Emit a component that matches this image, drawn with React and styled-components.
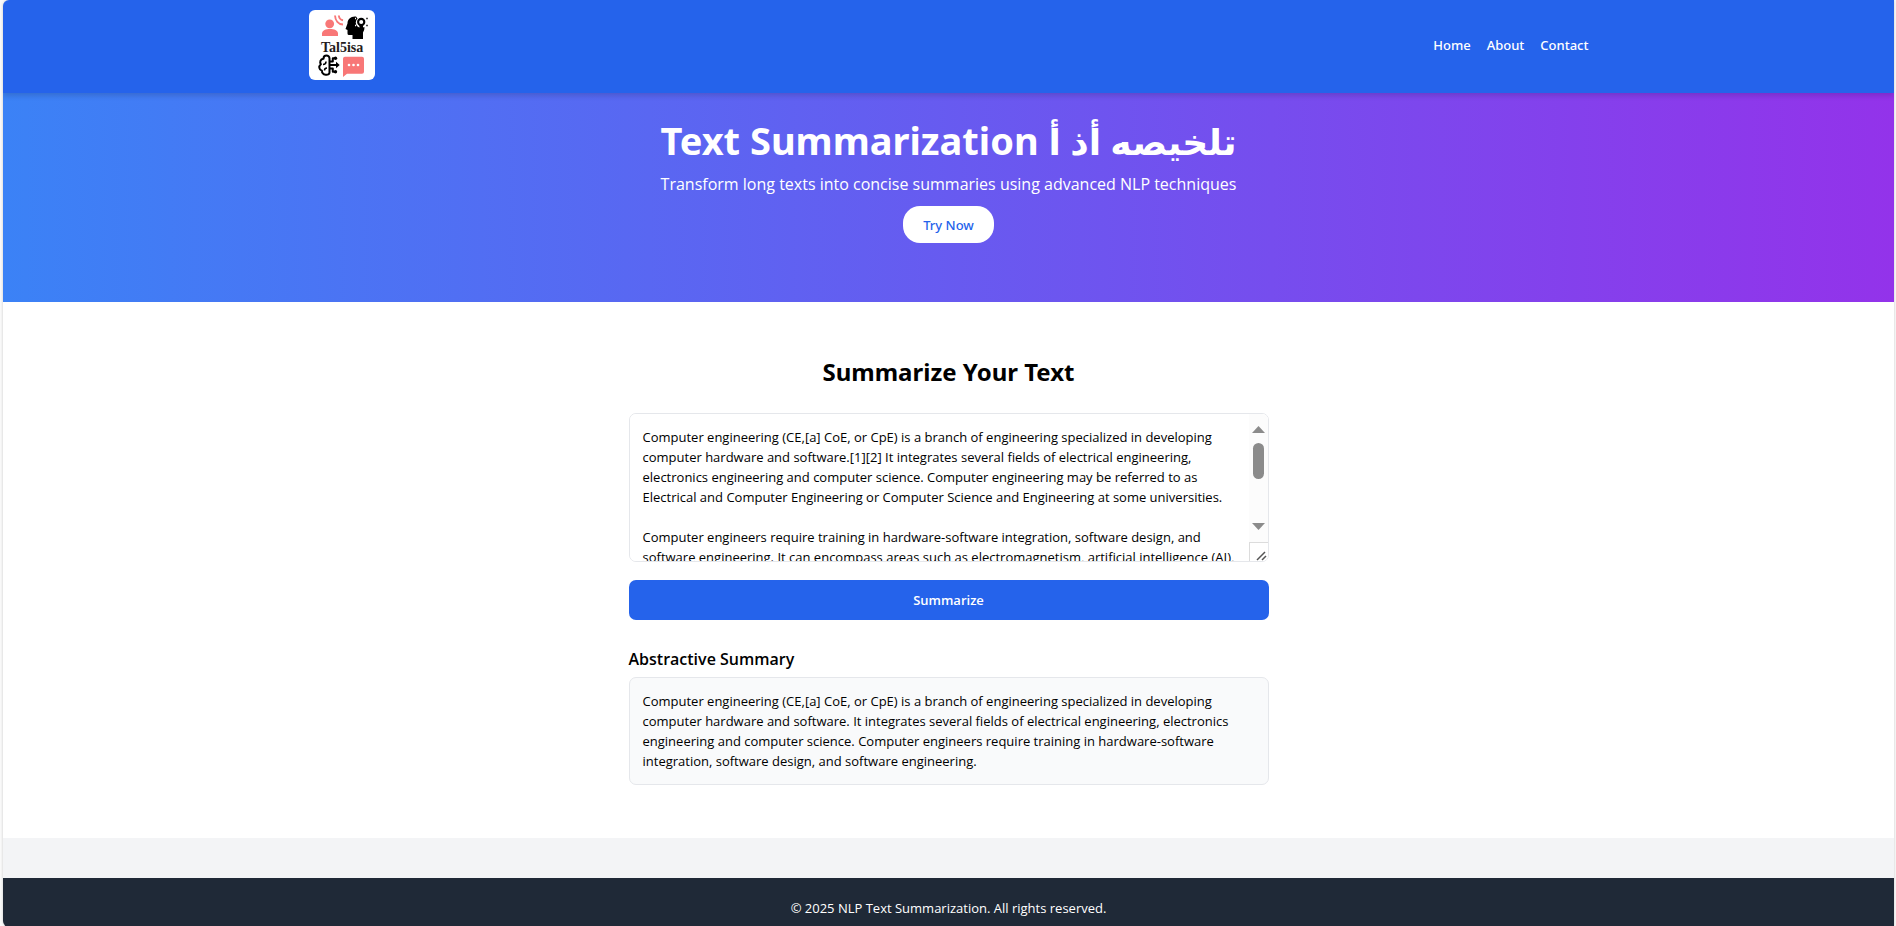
import React, { useState } from "react";
import styled, { createGlobalStyle } from "styled-components";

const displayFont = `"Segoe UI", "Noto Sans", "DejaVu Sans", sans-serif`;

const GlobalStyle = createGlobalStyle`
  *, *::before, *::after { box-sizing: border-box; }
  body {
    margin: 0;
    background: #fafafa;
    color: #000;
    font-family: "Segoe UI", "Open Sans", "DejaVu Sans", sans-serif;
    font-size: 13px;
    line-height: 20px;
  }
  h1, h2, h3, p { margin: 0; }
  button, textarea { font: inherit; }
`;

const Page = styled.div`
  display: flex;
  flex-direction: column;
  min-height: 100vh;
  margin: 0 2px 0 3px;
  border-radius: 6px 0 0 6px;
  overflow: hidden;
  background: #f3f4f6;
  box-shadow: 0 0 3px rgba(0, 0, 0, 0.2);
`;

const Header = styled.header`
  position: relative;
  z-index: 1;
  padding: 10px 16px 13px;
  background: #2563eb;
  color: #fff;
  box-shadow: 0 3px 5px rgba(0, 0, 0, 0.14);
`;

const HeaderInner = styled.div`
  display: flex;
  align-items: center;
  justify-content: space-between;
  max-width: 1280px;
  margin: 0 auto;
`;

const LogoSvg = styled.svg`
  display: block;
  width: 66px;
  height: 70px;
  border-radius: 6px;
  background: #fff;
`;

const Nav = styled.nav`
  display: flex;
  gap: 16px;
`;

const NavLink = styled.a`
  color: #fff;
  font-family: ${displayFont};
  font-weight: 500;
  text-decoration: none;
`;

const Hero = styled.section`
  display: flex;
  flex-direction: column;
  align-items: center;
  padding: 23px 16px 59px;
  background: linear-gradient(to right, #3b82f6, #9333ea);
  color: #fff;
  text-align: center;
`;

const HeroTitle = styled.h1`
  font-family: ${displayFont};
  font-size: 38px;
  font-weight: 700;
  line-height: 48px;
`;

const ArabicName = styled.span`
  font-size: 36px;
  line-height: 1;
`;

const HeroText = styled.p`
  margin: 7px 0 8px;
  font-size: 16px;
  line-height: 27px;
`;

const TryButton = styled.button`
  height: 37px;
  padding: 0 20px;
  border: 0;
  border-radius: 17px;
  background: #fff;
  color: #2563eb;
  font-family: ${displayFont};
  font-weight: 500;
`;

const Main = styled.main`
  padding: 53px 16px;
  background: #fff;
`;

const Content = styled.div`
  display: flex;
  flex-direction: column;
  max-width: 640px;
  margin: 0 auto;
`;

const SectionTitle = styled.h2`
  margin-bottom: 25px;
  font-family: ${displayFont};
  font-size: 24px;
  font-weight: 700;
  line-height: 33px;
  text-align: center;
`;

const InputFrame = styled.div`
  position: relative;
`;

const TextInput = styled.textarea`
  display: block;
  width: 100%;
  height: 149px;
  padding: 13px 32px 13px 13px;
  border: 1px solid #e5e7eb;
  border-radius: 7px;
  background: #fff;
  color: #000;
  outline: 0;
  overflow-y: scroll;
  resize: none;
  scrollbar-width: none;
`;

const ScrollColumn = styled.div`
  position: absolute;
  top: 1px;
  right: 1px;
  bottom: 1px;
  display: flex;
  flex-direction: column;
  align-items: center;
  width: 19px;
  padding-top: 12px;
  border-radius: 0 6px 6px 0;
  overflow: hidden;
  background: #fcfcfc;
  pointer-events: none;
`;

const ScrollArrow = styled.svg`
  display: block;
  flex: none;
  width: 13px;
  height: 7px;
  fill: #8b8b8b;
`;

const ScrollTrack = styled.div`
  flex: 1;
  width: 11px;
  margin: 10px 0 8px;
`;

const ScrollThumb = styled.div`
  height: 36px;
  border-radius: 6px;
  background: #8b8b8b;
`;

const ResizeCorner = styled.svg`
  display: block;
  flex: none;
  width: 19px;
  height: 19px;
  margin-top: 12px;
  border: solid #dcdcdc;
  border-width: 1px 0 0 1px;
  background: #fff;
`;

const SubmitButton = styled.button`
  height: 40px;
  margin: 18px 0 26px;
  border: 0;
  border-radius: 7px;
  background: #2563eb;
  color: #fff;
  font-weight: 600;
`;

const SummaryTitle = styled.h3`
  margin-bottom: 4px;
  font-size: 16px;
  font-weight: 600;
  line-height: 27px;
`;

const SummaryBox = styled.p`
  padding: 13px;
  border: 1px solid #e5e7eb;
  border-radius: 7px;
  background: #f9fafb;
`;

const Footer = styled.footer`
  flex: 1;
  margin-top: 40px;
  padding: 20px 16px 9px;
  background: #1f2937;
  color: #fff;
  text-align: center;
`;

function Logo() {
  return (
    <LogoSvg viewBox="0 0 66 70" role="img" aria-label="Tal5isa">
      {/* speaker with sound waves */}
      <g fill="#f87777">
        <circle cx="20.700" cy="13.800" r="4.400" />
        <path d="M13 26v-2.500c0-3.200 4-4.500 8-4.500s8 1.300 8 4.500V26z" />
      </g>
      <g fill="none" stroke="#f87777" strokeWidth="1.900">
        <path d="M26 5.500c.3 5 3.300 8.700 8 9" />
        <path d="M29.800 5.500c.3 2.500 1.700 4.300 4.200 4.800" />
      </g>
      {/* head in profile with a light bulb */}
      <path d="M47 6.500c-5-.5-8.500 2.500-8.500 7l-2 5.500 2 1v3.500q0 1.500 1.500 1.500h3.500V29H54v-6.500q1.500-2 1.500-5z" />
      <circle cx="52.200" cy="12.500" r="5.400" fill="#fff" />
      <circle cx="52.200" cy="12" r="3.100" fill="#fff" stroke="#000" strokeWidth="2.100" />
      <path d="M50.400 14.500h3.600v4h-3.600z" />
      <path d="M46 8.500h1M46 15.500h1" stroke="#fff" strokeWidth="1.400" />
      <path d="M57.300 8.500h1.400M57.300 15.500h1.400" stroke="#000" strokeWidth="1.400" />
      <text x="12" y="41.500" fontFamily="'Liberation Serif', serif" fontWeight="700" fontSize="14" fill="#241c1c">Tal5isa</text>
      {/* brain with circuit branches */}
      <g fill="none" stroke="#000" strokeWidth="2" strokeLinejoin="round">
        <path d="M20.500 62.500V48.500c0-4-6-4-6 .2-3.300.3-4 3.500-2.600 5.500-2.600 2-1.900 5.800 1 6.500 0 4.600 7.600 5.500 7.600 1.800" />
        <path d="M14 54.500q3 0 3-3M15.500 60.500q0-2.500 2.500-2.500" strokeWidth="1.500" />
        <path d="M20.500 55h8M20.500 51.500h3.300v-3.200h2.500M20.500 58.500h3.300v3.200h2.500" />
      </g>
      <circle cx="26.500" cy="48.300" r="1.700" />
      <circle cx="26.500" cy="61.700" r="1.700" />
      <path d="M27 51.700v6.600l3.700-3.300z" />
      {/* chat bubble */}
      <path
        d="M36 46.700h17a2 2 0 0 1 2 2v13a2 2 0 0 1-2 2H38L34 67V48.700a2 2 0 0 1 2-2z"
        fill="#f87777"
      />
      <g fill="#fff">
        <circle cx="40" cy="55" r="1.300" />
        <circle cx="44.500" cy="55" r="1.300" />
        <circle cx="49" cy="55" r="1.300" />
      </g>
    </LogoSvg>
  );
}

const sampleText = `Computer engineering (CE,[a] CoE, or CpE) is a branch of engineering specialized in developing computer hardware and software.[1][2] It integrates several fields of electrical engineering, electronics engineering and computer science. Computer engineering may be referred to as Electrical and Computer Engineering or Computer Science and Engineering at some universities.

Computer engineers require training in hardware-software integration, software design, and software engineering. It can encompass areas such as electromagnetism, artificial intelligence (AI), robotics, computer networks, computer architecture and operating systems. Computer engineers are involved in many hardware and software aspects of computing, from the design of individual microcontrollers, microprocessors, personal computers, and supercomputers, to circuit design. This field of engineering not only focuses on how computer systems themselves work, but also on how to integrate them into the larger picture.

Robotics are one of the applications of computer engineering. Computer engineering usually deals with areas including writing software and firmware for embedded microcontrollers, designing VLSI chips, analog sensors, mixed signal circuit boards, thermodynamics and control systems.`;

const summary =
  "Computer engineering (CE,[a] CoE, or CpE) is a branch of engineering specialized in developing computer hardware and software. It integrates several fields of electrical engineering, electronics engineering and computer science. Computer engineers require training in hardware-software integration, software design, and software engineering.";

export default function App() {
  const [text, setText] = useState(sampleText);
  const [thumbOffset, setThumbOffset] = useState(0);

  const handleScroll = (event) => {
    const { scrollTop, scrollHeight, clientHeight } = event.target;
    setThumbOffset(Math.round((scrollTop / Math.max(1, scrollHeight - clientHeight)) * 37));
  };

  return (
    <>
      <GlobalStyle />
      <Page>
        <Header>
          <HeaderInner>
            <Logo />
            <Nav>
              <NavLink href="#home">Home</NavLink>
              <NavLink href="#about">About</NavLink>
              <NavLink href="#contact">Contact</NavLink>
            </Nav>
          </HeaderInner>
        </Header>
        <Hero id="home">
          <HeroTitle>
            Text Summarization <ArabicName lang="ar">تلخيصه أذ أ</ArabicName>
          </HeroTitle>
          <HeroText>Transform long texts into concise summaries using advanced NLP techniques</HeroText>
          <TryButton type="button">Try Now</TryButton>
        </Hero>
        <Main>
          <Content>
            <SectionTitle id="summarize-title">Summarize Your Text</SectionTitle>
            <InputFrame>
              <TextInput
                aria-labelledby="summarize-title"
                spellCheck={false}
                value={text}
                onChange={(event) => setText(event.target.value)}
                onScroll={handleScroll}
              />
              <ScrollColumn aria-hidden="true">
                <ScrollArrow viewBox="0 0 13 7"><path d="M0 7 6.500 0 13 7z" /></ScrollArrow>
                <ScrollTrack>
                  <ScrollThumb style={{ marginTop: thumbOffset }} />
                </ScrollTrack>
                <ScrollArrow viewBox="0 0 13 7"><path d="M0 0 6.500 7 13 0z" /></ScrollArrow>
                <ResizeCorner viewBox="0 0 18 18">
                  <path d="M7 17 15 9M12 17l4-4" fill="none" stroke="#555" strokeWidth="1.500" />
                </ResizeCorner>
              </ScrollColumn>
            </InputFrame>
            <SubmitButton type="button">Summarize</SubmitButton>
            <SummaryTitle>Abstractive Summary</SummaryTitle>
            <SummaryBox>{summary}</SummaryBox>
          </Content>
        </Main>
        <Footer>© 2025 NLP Text Summarization. All rights reserved.</Footer>
      </Page>
    </>
  );
}
